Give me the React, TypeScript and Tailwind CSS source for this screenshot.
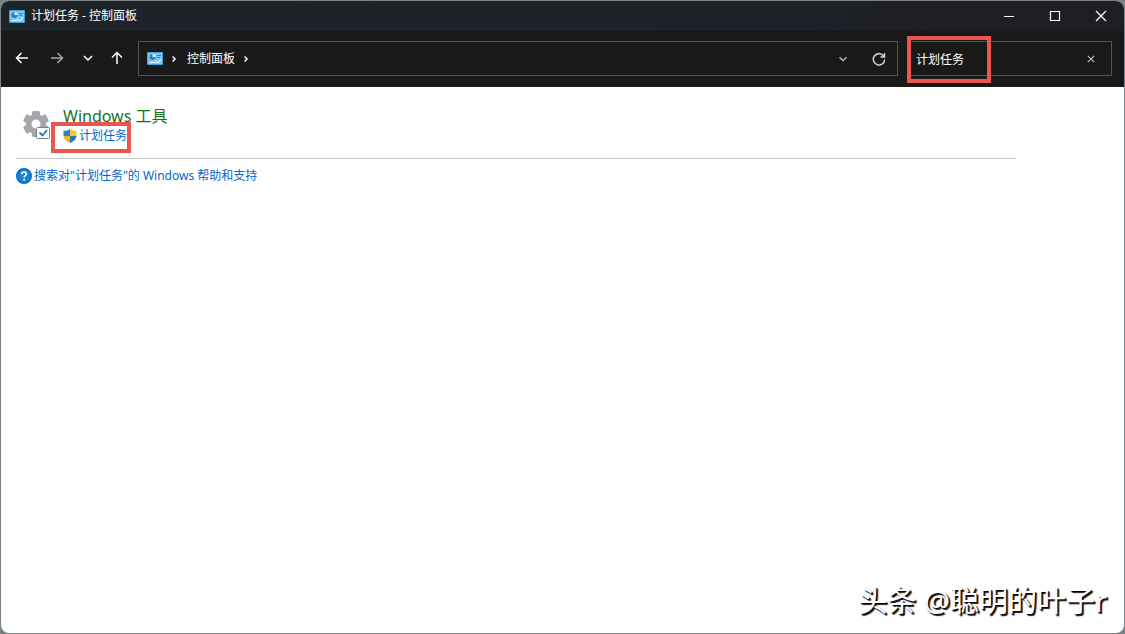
import { useState } from 'react';

const font = "font-['Noto_Sans','Noto_Sans_CJK_SC',sans-serif]";

function PanelIcon() {
  return (
    <svg width="16" height="13" viewBox="0 0 16 13" className="shrink-0" aria-hidden="true">
      <rect width="16" height="13" rx="1" fill="#3d9fdc" />
      <rect x="1" y="1" width="14" height="11" fill="#7cc8f5" />
      <circle cx="5.5" cy="5" r="3" fill="#2f7fb8" />
      <path d="M5.5 5V2a3 3 0 0 1 3 3Z" fill="#e4f5ff" />
      <path d="M10 3.5h4M10 5.5h3" stroke="#2c86c4" />
      <path d="M3 10.5h5M8 9l3 2 3-4" stroke="#f2fbff" fill="none" />
    </svg>
  );
}

function GearIcon() {
  return (
    <svg width="30" height="32" viewBox="0 0 30 32" className="mt-1 shrink-0" aria-hidden="true">
      <g fill="#a3a6aa">
        <rect x="10" y="1" width="8" height="26" rx="1.5" />
        <rect x="10" y="1" width="8" height="26" rx="1.5" transform="rotate(60 14 14)" />
        <rect x="10" y="1" width="8" height="26" rx="1.5" transform="rotate(120 14 14)" />
        <circle cx="14" cy="14" r="10" />
      </g>
      <circle cx="14" cy="14" r="4.5" fill="#fff" />
      <rect x="14.5" y="17.5" width="13" height="11" rx="1" fill="#fff" stroke="#7d8287" />
      <path d="m17.500 22.500 3 3 4.500-5.500" fill="none" stroke="#1f6fc0" strokeWidth="1.8" />
    </svg>
  );
}

function ShieldIcon() {
  return (
    <svg width="14" height="14" viewBox="0 0 14 14" className="shrink-0" aria-hidden="true">
      <path d="M7 0C5.3 1.3 3 1.8.5 1.8V7H7Z" fill="#2f80c2" />
      <path d="M7 0c1.7 1.3 4 1.8 6.5 1.8V7H7Z" fill="#f7c825" />
      <path d="M.5 7c.3 3.500 3 5.500 6.500 7V7Z" fill="#efb81e" />
      <path d="M13.5 7c-.3 3.500-3 5.500-6.500 7V7Z" fill="#2b78b8" />
    </svg>
  );
}

function HelpIcon() {
  return (
    <svg width="16" height="16" viewBox="0 0 16 16" className="shrink-0" aria-hidden="true">
      <circle cx="8" cy="8" r="8" fill="#0c6cb8" />
      <circle cx="8" cy="8" r="6.5" fill="#1586d4" />
      <path d="M5.8 6.2c0-3 4.5-2.800 4.500-.2 0 1.700-2.200 1.700-2.200 3.500" fill="none" stroke="#fff" strokeWidth="1.5" />
      <circle cx="8.1" cy="11.7" r="1" fill="#fff" />
    </svg>
  );
}

function LineIcon({ d, size = 14, className = '' }: { d: string; size?: number; className?: string }) {
  return (
    <svg width={size} height={size} viewBox="0 0 14 14" fill="none" stroke="currentColor" strokeWidth="1.5" className={`shrink-0 ${className}`} aria-hidden="true">
      <path d={d} />
    </svg>
  );
}

function TitleBar() {
  return (
    <header className="flex h-[30px] items-center bg-linear-to-r from-[#1d2428] via-[#1d2229] to-[#1e1e23] pl-2 text-white">
      <PanelIcon />
      <h1 className="ml-1.5 text-xs">计划任务 - 控制面板</h1>
      <div className="ml-auto flex h-full">
        <button type="button" aria-label="最小化" className="flex w-[46px] items-center justify-center">
          <LineIcon d="M2 7.5h10" className="[stroke-width:1]" />
        </button>
        <button type="button" aria-label="最大化" className="flex w-[46px] items-center justify-center">
          <LineIcon d="M2.5 2.5h9v9h-9Z" className="[stroke-width:1.2]" />
        </button>
        <button type="button" aria-label="关闭" className="flex w-[46px] items-center justify-center">
          <LineIcon d="m2 2 10 10M12 2 2 12" className="[stroke-width:1.2]" />
        </button>
      </div>
    </header>
  );
}

function NavBar() {
  const [query, setQuery] = useState('计划任务');

  return (
    <nav className="flex h-14 items-start bg-[#191919] pt-2.5 pr-3 pl-1 text-white">
      <button type="button" aria-label="后退" className="flex h-[34px] w-[34px] items-center justify-center">
        <LineIcon d="M13 7H1.500M6.500 2l-5 5 5 5" />
      </button>
      <button type="button" aria-label="前进" className="flex h-[34px] w-9 items-center justify-center text-[#a8a8a8]">
        <LineIcon d="M1 7h11.500M7.500 2l5 5-5 5" />
      </button>
      <button type="button" aria-label="最近浏览的位置" className="flex h-[34px] w-[26px] items-center justify-center">
        <LineIcon d="m3 5 4 4 4-4" />
      </button>
      <button type="button" aria-label="向上" className="flex h-[34px] w-8 items-center justify-center">
        <LineIcon d="M7 13V1.500M2 6.500l5-5 5 5" />
      </button>

      <div className="ml-[5px] flex h-[35px] flex-1 items-center border border-[#535353] pl-2">
        <PanelIcon />
        <LineIcon d="m5 3.500 3.500 3.500L5 10.500" size={10} className="ml-1.5 [stroke-width:2]" />
        <button type="button" className="ml-2 text-xs">控制面板</button>
        <LineIcon d="m5 3.500 3.500 3.500L5 10.500" size={10} className="ml-1.5 [stroke-width:2]" />
        <button type="button" aria-label="以前的位置" className="ml-auto flex h-full w-9 items-center justify-center text-[#c4c4c4]">
          <LineIcon d="m3 5 4 4 4-4" size={12} />
        </button>
        <button type="button" aria-label="刷新" className="flex h-full w-9 items-center justify-center text-[#d0d0d0]">
          <LineIcon d="M12.200 5A5.700 5.700 0 1 0 12.700 7.500M12.500 1v4H8.500" />
        </button>
      </div>

      <div className="relative ml-2.5 flex h-[35px] w-[204px] items-center border border-[#535353]">
        <input
          type="text"
          aria-label="搜索控制面板"
          value={query}
          onChange={(e) => setQuery(e.target.value)}
          className="h-full min-w-0 flex-1 bg-transparent pl-[7px] text-xs text-white outline-none"
        />
        <button type="button" aria-label="清除" onClick={() => setQuery('')} className="flex h-full w-10 items-center justify-center text-[#c4c4c4]">
          <LineIcon d="m2.500 2.500 9 9M11.500 2.500l-9 9" size={10} />
        </button>
        <div className="pointer-events-none absolute -top-1.5 -left-0.5 h-[47px] w-[84px] border-4 border-[#ef5350]" />
      </div>
    </nav>
  );
}

export default function App() {
  return (
    <div className={`flex min-h-screen flex-col bg-[#7c8284] p-px ${font}`}>
      <div className="flex flex-1 flex-col overflow-hidden rounded-lg bg-white">
        <TitleBar />
        <NavBar />

        <main className="flex flex-1 flex-col px-[15px] pt-[19px]">
          <section className="flex max-w-[1000px] border-b border-[#c8c8c8] pb-3 pl-1.5">
            <GearIcon />
            <div className="ml-[11px]">
              <h2 className="text-base leading-5 text-[#14731a]">Windows 工具</h2>
              <div className="relative flex h-5 items-center">
                <ShieldIcon />
                <a href="#tasks" className="ml-0.5 text-xs text-[#0067cc]">计划任务</a>
                <div className="pointer-events-none absolute -top-1 -left-3 h-[31px] w-20 border-4 border-[#ef5350]" />
              </div>
            </div>
          </section>

          <a href="#help" className="mt-[9px] flex items-center gap-0.5 self-start text-xs text-[#0067cc]">
            <HelpIcon />
            <span>搜索对"计划任务"的 Windows 帮助和支持</span>
          </a>

          <p className="mt-auto self-end pr-0.5 pb-3 text-[29px] leading-10 text-white [text-shadow:1px_1px_1px_#000,2px_2px_1px_#222]">
            头条 @聪明的叶子r
          </p>
        </main>
      </div>
    </div>
  );
}
